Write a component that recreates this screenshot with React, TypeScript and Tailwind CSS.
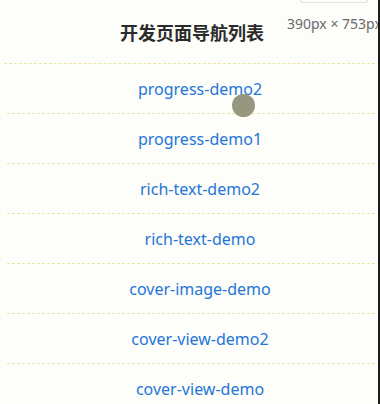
const pages = [
  "progress-demo2",
  "progress-demo1",
  "rich-text-demo2",
  "rich-text-demo",
  "cover-image-demo",
  "cover-view-demo2",
  "cover-view-demo",
]

export default function App() {
  return (
    <div className="relative h-[404px] w-[380px] overflow-hidden bg-[#fdfdfa] font-['Noto_Sans','Noto_Sans_CJK_SC',sans-serif]">
      {/* device size hint */}
      <div className="absolute left-[300px] top-0 h-[3px] w-[68px] rounded-b border-x border-b border-[#e2e2e2]" />
      <div className="absolute left-[287px] top-[13px] whitespace-nowrap text-[14px] text-[#6a6a6a]">
        390px × 753px
      </div>
      <div className="absolute right-0 top-0 h-full w-[2px] bg-[#1c1c1c]" />

      <div className="ml-1 flex h-[64px] items-center justify-center border-b border-dashed border-[#eee6a6] pt-[3px]">
        <h1 className="text-[18px] font-bold text-[#2b2b2b]">开发页面导航列表</h1>
      </div>

      <ul className="flex flex-col pl-[7px]">
        {pages.map((p) => (
          <li
            key={p}
            className="flex h-[50px] items-center justify-center border-b border-dashed border-[#eee6a6] pl-[13px]"
          >
            <a className="text-[16px] text-[#2476d6]">{p}</a>
          </li>
        ))}
      </ul>

      {/* touch cursor */}
      <div className="absolute left-[232px] top-[94px] h-[23px] w-[23px] rounded-full bg-[#8c8c72] opacity-90" />
    </div>
  )
}
